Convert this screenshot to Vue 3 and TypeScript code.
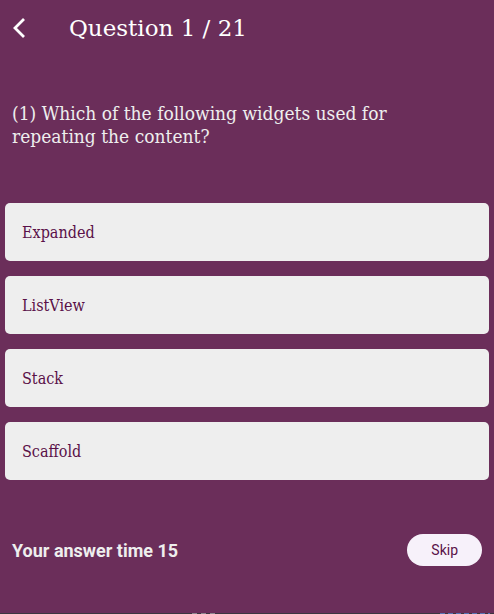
<script setup lang="ts">
import { ref } from 'vue'

const options: string[] = ['Expanded', 'ListView', 'Stack', 'Scaffold']
const current = ref(1)
const total = 21
const secondsLeft = ref(15)
const selected = ref<string | null>(null)
</script>

<template>
  <main class="quiz">
    <header class="bar">
      <button class="back" type="button" aria-label="Back">
        <svg viewBox="0 0 14 22" width="14" height="22" aria-hidden="true">
          <path d="M12 2 L3 11 L12 20" fill="none" stroke="currentColor" stroke-width="2.8" />
        </svg>
      </button>
      <h1 class="title">Question {{ current }} / {{ total }}</h1>
    </header>

    <p class="question">({{ current }}) Which of the following widgets used for repeating the content?</p>

    <div class="options">
      <button
        v-for="option in options"
        :key="option"
        class="option"
        type="button"
        :aria-pressed="selected === option"
        @click="selected = option"
      >
        {{ option }}
      </button>
    </div>

    <footer class="footer">
      <span class="timer">Your answer time {{ secondsLeft }}</span>
      <button class="skip" type="button">Skip</button>
    </footer>

    <div class="edge" aria-hidden="true">
      <span class="marks grey"></span>
      <span class="marks blue"></span>
    </div>
  </main>
</template>

<style>
body {
  margin: 0;
  background: #6b2e5a;
}
</style>

<style scoped>
.quiz {
  display: flex;
  flex-direction: column;
  min-height: 100vh;
  background: #6b2e5a;
  color: #eeeeee;
  font-family: "DejaVu Serif Condensed", "DejaVu Serif", serif;
}

button {
  border: 0;
  cursor: pointer;
}

.bar {
  display: flex;
  align-items: center;
  gap: 43px;
  height: 56px;
  padding-left: 12px;
  color: #ffffff;
}

.back {
  display: flex;
  padding: 0;
  background: none;
  color: inherit;
}

.title {
  margin: 0;
  font-family: "DejaVu Serif", serif;
  font-size: 23px;
  font-weight: 400;
}

.question {
  margin: 46px 40px 55px 12px;
  font-size: 19px;
  line-height: 23px;
}

.options {
  display: flex;
  flex-direction: column;
  gap: 15px;
  padding: 0 5px;
}

.option {
  height: 58px;
  padding: 0 17px;
  border-radius: 5px;
  background: #eeeeee;
  color: #5a1148;
  font-family: inherit;
  font-size: 16px;
  text-align: left;
}

.footer {
  display: flex;
  align-items: center;
  justify-content: space-between;
  padding: 54px 12px 0;
  font-family: Roboto, sans-serif;
}

.timer {
  font-size: 18px;
  font-weight: 700;
}

.skip {
  height: 32px;
  padding: 0 24px;
  border-radius: 16px;
  background: #f7f1fa;
  color: #5a1148;
  font-family: inherit;
  font-size: 14px;
}

.edge {
  display: flex;
  justify-content: space-between;
  height: 1px;
  margin-top: auto;
  padding: 0 4px 0 192px;
  background: #3c3540;
}

.marks {
  width: 25px;
}

.grey {
  background: repeating-linear-gradient(90deg, #8d8790 0 5px, #3c3540 5px 9px);
}

.blue {
  width: 50px;
  background: repeating-linear-gradient(90deg, #5673b5 0 5px, #3c3540 5px 8px);
}
</style>
